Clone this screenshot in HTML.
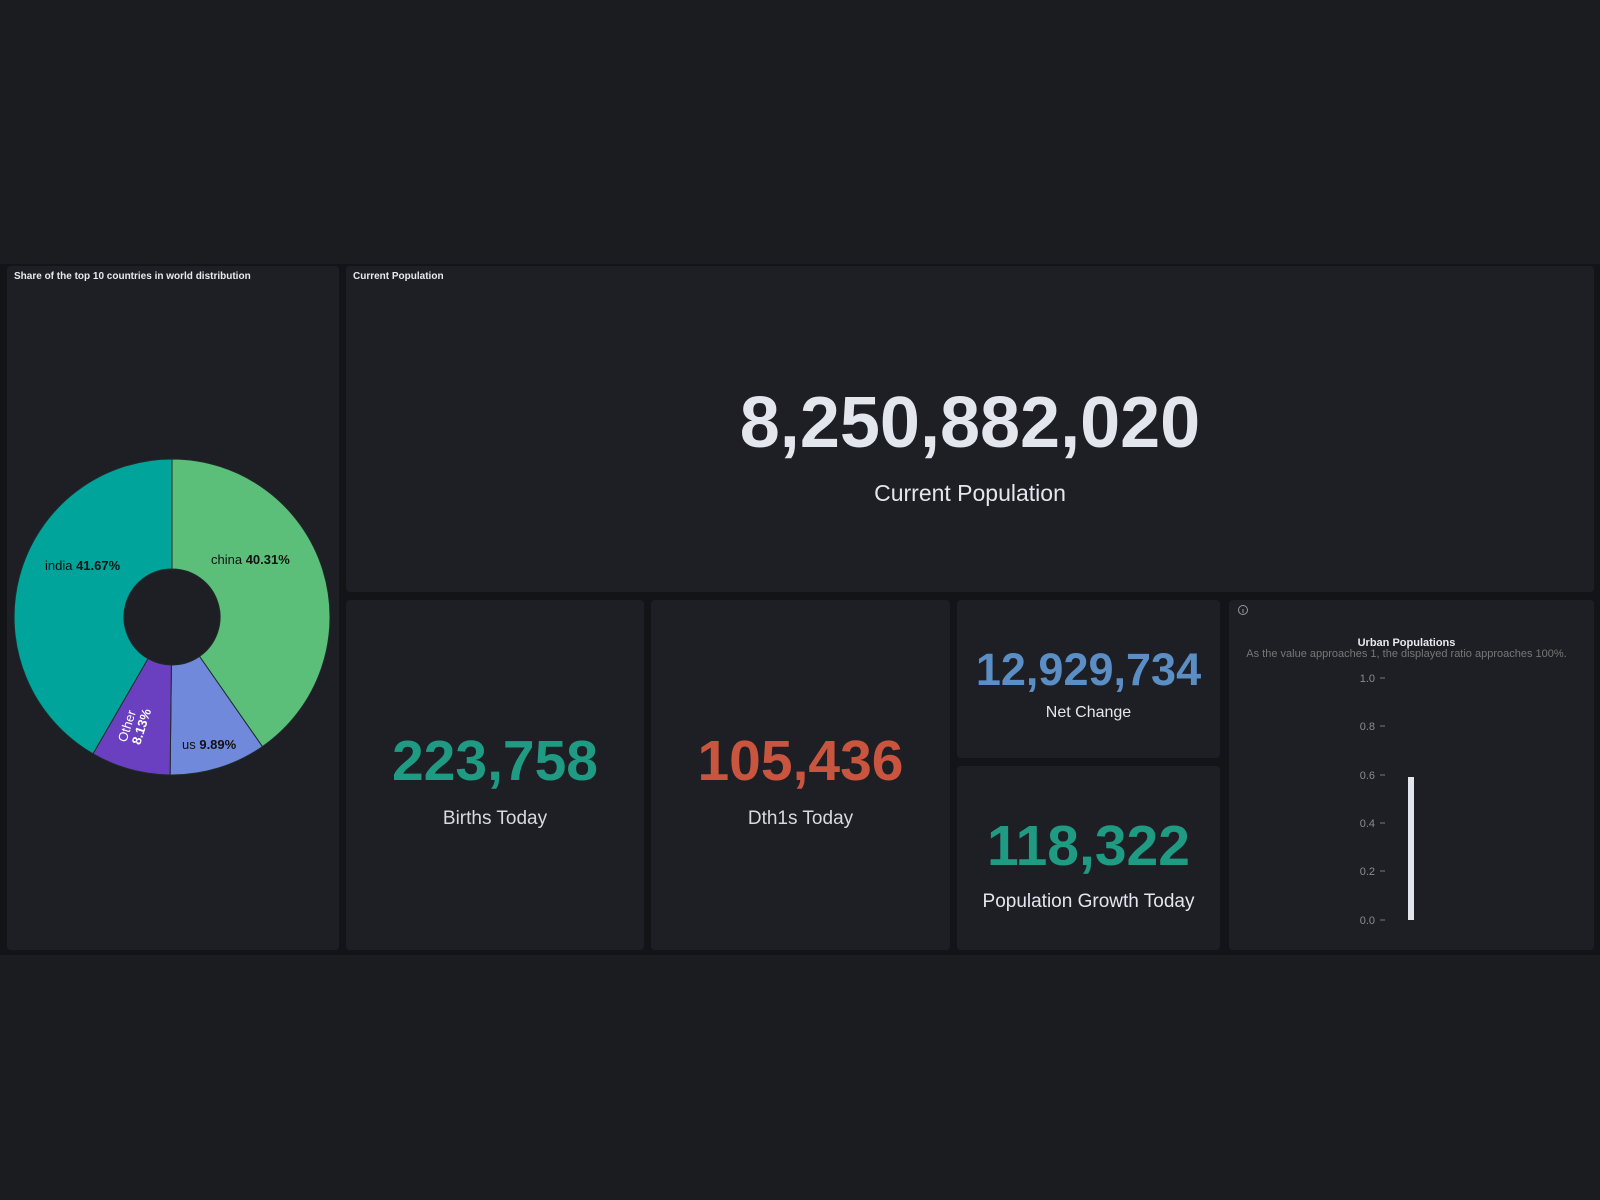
<!DOCTYPE html>
<html><head><meta charset="utf-8"><style>
*{margin:0;padding:0;box-sizing:border-box}
body{width:1600px;height:1200px;background:#1b1c20;font-family:"Liberation Sans",sans-serif;position:relative;overflow:hidden}
.band{position:absolute;left:0;top:264px;width:1600px;height:691px;background:#131418}
.p{position:absolute;background:#1e1f24;border-radius:4px}
.t{position:absolute;left:7px;top:5px;color:#e8e9ee;font-size:10px;font-weight:bold}
.c{position:absolute;left:0;right:0;text-align:center}
</style></head><body>
<div class="band"></div>
<div class="p" style="left:7px;top:266px;width:332px;height:684px">
<div class="t">Share of the top 10 countries in world distribution</div></div>
<svg style="position:absolute;left:0;top:0" width="400" height="960">
<g stroke="#1e2a2a" stroke-width="1">
<path d="M172 459 A158 158 0 0 1 262.4 746.6 L199.5 656.4 A48 48 0 0 0 172 569 Z" fill="#5bbf7a"/>
<path d="M262.4 746.6 A158 158 0 0 1 170.1 775 L171.4 665 A48 48 0 0 0 199.5 656.4 Z" fill="#7189da"/>
<path d="M170.1 775 A158 158 0 0 1 93 753.8 L148 658.6 A48 48 0 0 0 171.4 665 Z" fill="#6b40c0"/>
<path d="M93 753.8 A158 158 0 0 1 172 459 L172 569 A48 48 0 0 0 148 658.6 Z" fill="#00a49b"/>
</g>
<g font-family="Liberation Sans" font-size="13" fill="#111">
<text x="45" y="570">india <tspan font-weight="bold">41.67%</tspan></text>
<text x="211" y="564">china <tspan font-weight="bold">40.31%</tspan></text>
<text x="182" y="749">us <tspan font-weight="bold">9.89%</tspan></text>
<g transform="translate(133,728) rotate(-72)" fill="#fff" text-anchor="middle">
<text x="0" y="-2">Other</text><text x="4" y="12" font-weight="bold">8.13%</text></g>
</g></svg>
<div class="p" style="left:346px;top:266px;width:1248px;height:326px">
<div class="t">Current Population</div>
<div class="c" style="top:116px;font-size:72px;font-weight:bold;color:#e4e6ee">8,250,882,020</div>
<div class="c" style="top:214px;font-size:23px;color:#e4e6ee">Current Population</div></div>
<div class="p" style="left:346px;top:600px;width:298px;height:350px">
<div class="c" style="top:128px;font-size:57px;font-weight:bold;color:#1f9b84">223,758</div>
<div class="c" style="top:208px;font-size:19px;color:#d8d9e0">Births Today</div></div>
<div class="p" style="left:651px;top:600px;width:299px;height:350px">
<div class="c" style="top:128px;font-size:57px;font-weight:bold;color:#c9553f">105,436</div>
<div class="c" style="top:208px;font-size:19px;color:#d8d9e0">Dth1s Today</div></div>
<div class="p" style="left:957px;top:600px;width:263px;height:158px">
<div class="c" style="top:44px;font-size:45px;font-weight:bold;color:#5b8ec4">12,929,734</div>
<div class="c" style="top:104px;font-size:16px;color:#e4e6ee">Net Change</div></div>
<div class="p" style="left:957px;top:766px;width:263px;height:184px">
<div class="c" style="top:47px;font-size:57px;font-weight:bold;color:#1f9b84">118,322</div>
<div class="c" style="top:125px;font-size:19px;color:#e4e6ee">Population Growth Today</div></div>
<div class="p" style="left:1229px;top:600px;width:365px;height:350px">
<svg style="position:absolute;left:8px;top:4px" width="12" height="12"><circle cx="6" cy="6" r="4.5" fill="none" stroke="#999" stroke-width="1"/><line x1="6" y1="5" x2="6" y2="9" stroke="#999"/></svg>
<div class="c" style="top:37px;font-size:11px;font-weight:bold;color:#e8e9ee;left:-10px">Urban Populations</div>
<div class="c" style="top:48px;font-size:11px;color:#777;left:-10px">As the value approaches 1, the displayed ratio approaches 100%.</div>
<svg style="position:absolute;left:0;top:0" width="365" height="350" font-family="Liberation Sans" font-size="11" fill="#8a8b90">
<g text-anchor="end"><text x="146" y="82">1.0</text><text x="146" y="130">0.8</text><text x="146" y="179">0.6</text><text x="146" y="227">0.4</text><text x="146" y="275">0.2</text><text x="146" y="324">0.0</text></g>
<g stroke="#777"><line x1="151" y1="78" x2="156" y2="78"/><line x1="151" y1="126" x2="156" y2="126"/><line x1="151" y1="175" x2="156" y2="175"/><line x1="151" y1="223" x2="156" y2="223"/><line x1="151" y1="271" x2="156" y2="271"/><line x1="151" y1="320" x2="156" y2="320"/></g>
<rect x="179" y="177" width="6" height="143" fill="#e2e4ee"/>
</svg></div>
</body></html>
